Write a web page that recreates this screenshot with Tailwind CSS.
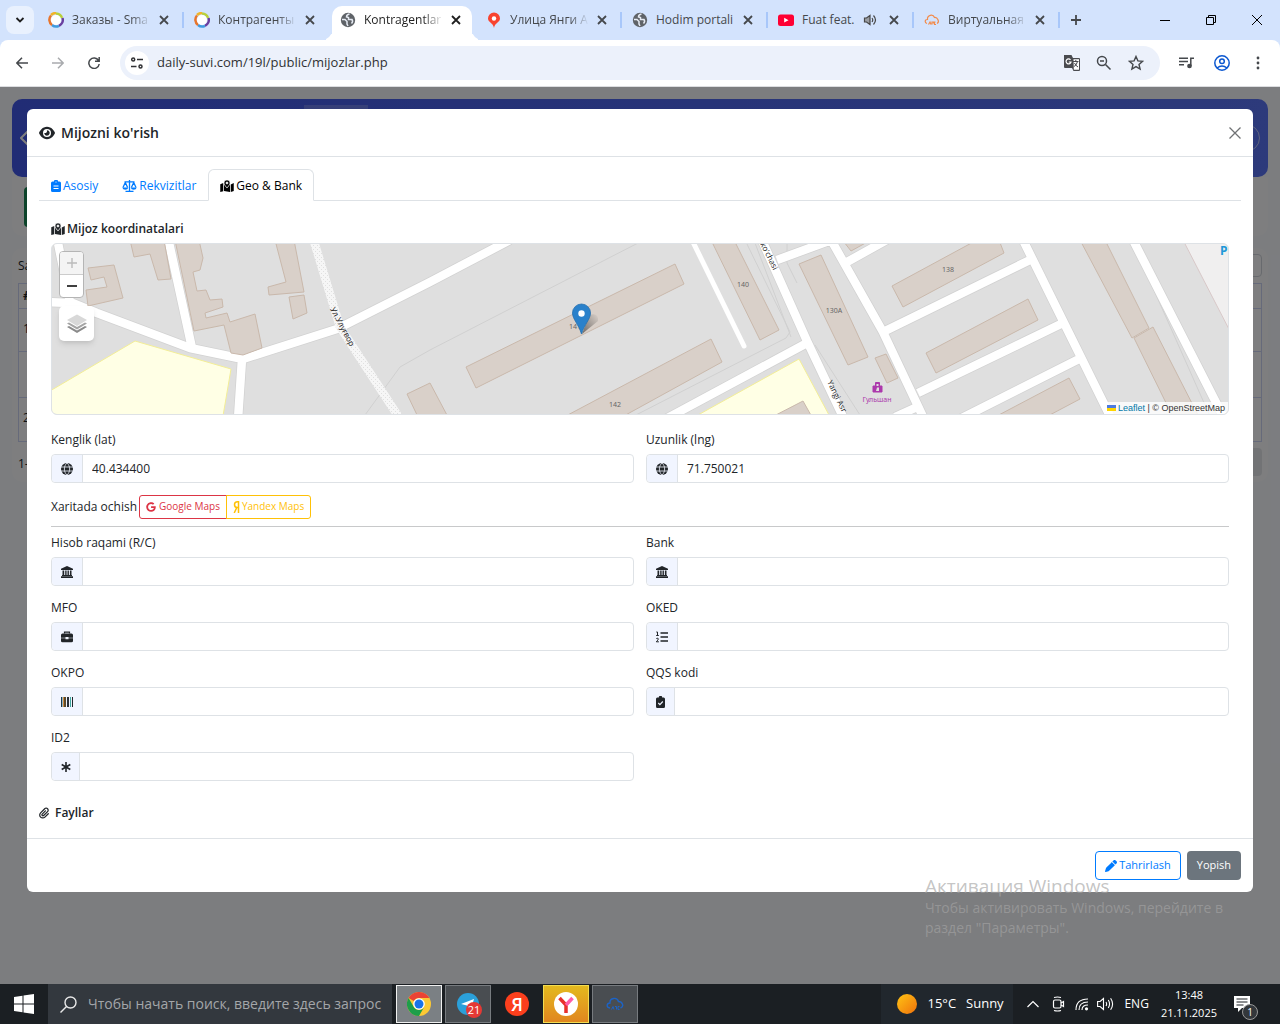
<!DOCTYPE html>
<html lang="uz">
<head>
  <meta charset="UTF-8" />
  <title>Kontragentlar</title>
  <script src="https://cdn.jsdelivr.net/npm/@tailwindcss/browser@4"></script>
</head>
<body class="min-h-screen flex flex-col bg-[#f8faff] font-['Open_Sans','Noto_Sans',sans-serif] text-xs text-[#212529] overflow-x-hidden">

  <!-- shared icons -->
  <svg class="hidden">
    <symbol id="i-x" viewBox="0 0 10 10"><path d="M1 1l8 8M9 1l-8 8" stroke="currentColor" stroke-width="1.8" fill="none" /></symbol>
    <symbol id="i-globe-tab" viewBox="0 0 16 16"><circle cx="8" cy="8" r="7.2" fill="#5f6368" /><path d="M2 7.500h3l2 2v2.500l1 2M9.500 2c-2.500.5-3 1.500-3 3l2 .5v2h3.500c1 1.500.5 3-.5 4" stroke="#e6ebf3" stroke-width="1.500" fill="none" /></symbol>
    <symbol id="i-ring" viewBox="0 0 16 16"><path d="M3 3A7 7 0 0 1 8 1" stroke="#f0b429" stroke-width="2.500" fill="none" /><path d="M8 1.500A6.500 6.500 0 0 1 14 6" stroke="#b9cf3c" stroke-width="2.500" fill="none" /><path d="M14.500 6A6.500 6.500 0 0 1 11 13.800" stroke="#6a3fa0" stroke-width="2.500" fill="none" /><path d="M11 13.800A6.500 6.500 0 0 1 4 13" stroke="#3f9be0" stroke-width="2.500" fill="none" /><path d="M4 13A6.500 6.500 0 0 1 3 3.500" stroke="#e8752c" stroke-width="2.500" fill="none" /><circle cx="8" cy="8" r="5" fill="#fff" /></symbol>
    <symbol id="i-map" viewBox="0 0 18 16"><path d="M0 5.500L4 4v11L0 16zM14 6l4-2v10.500L14 16zM5 4.500c.3 2 2 4 4 6.500 2-2.500 3.700-4.500 4-6V16L5 14.800z" /><path d="M9 0a4 4 0 0 0-4 4c0 2 2.500 4.500 4 6.500 1.500-2 4-4.500 4-6.500a4 4 0 0 0-4-4zm0 2.600a1.400 1.400 0 1 1 0 2.800 1.400 1.400 0 0 1 0-2.800z" stroke="#fff" stroke-width=".7" /></symbol>
    <symbol id="i-globe" viewBox="0 0 12 12"><circle cx="6" cy="6" r="6" /><path d="M0 4h12M0 8h12M6 0C2.500 3 2.500 9 6 12M6 0c3.500 3 3.500 9 0 12" stroke="#f1f5ff" stroke-width=".8" fill="none" /></symbol>
    <symbol id="i-bank" viewBox="0 0 12 12"><path d="M6 0l6 2.800V4H0V2.800zM1.500 4.500h1.700v4.700H1.500zM4.200 4.500h1.400v4.700H4.200zM6.500 4.500h1.400v4.700H6.500zM8.900 4.500h1.600v4.700H8.900zM1 9h10v1H1zM0 10.300h12V12H0z" /></symbol>
  </svg>

  <!-- browser tabs -->
  <header>
    <div class="h-10 bg-[#d3e3fd] flex items-center pl-1.5 text-[#45484c]">
      <button aria-label="Search tabs" class="w-7 h-7 mr-1 shrink-0 rounded-lg bg-[#e9f1fe] flex items-center justify-center">
        <svg class="w-2.5 h-2.5" viewBox="0 0 10 10"><path d="M1.500 3L5 6.500 8.500 3" stroke="#1f1f1f" stroke-width="1.800" fill="none" /></svg>
      </button>
      <div class="flex-1 max-w-[146px] min-w-0 flex items-center pl-2.5 pr-[11px] relative">
        <svg class="w-4 h-4 mr-2 shrink-0"><use href="#i-ring" /></svg>
        <span class="flex-1 whitespace-nowrap [mask-image:linear-gradient(to_right,black_75%,transparent)]">Заказы - Sma</span>
        <button aria-label="Close tab" class="ml-2 mr-1"><svg class="w-2.5 h-2.5"><use href="#i-x" /></svg></button>
        <span class="absolute right-0 w-0.5 h-4 bg-[#a8c7fa]"></span>
      </div>
      <div class="flex-1 max-w-[146px] min-w-0 flex items-center pl-2.5 pr-[11px]">
        <svg class="w-4 h-4 mr-2 shrink-0"><use href="#i-ring" /></svg>
        <span class="flex-1 whitespace-nowrap [mask-image:linear-gradient(to_right,black_75%,transparent)]">Контрагенты</span>
        <button aria-label="Close tab" class="ml-2 mr-1"><svg class="w-2.5 h-2.5"><use href="#i-x" /></svg></button>
      </div>
      <div class="flex-1 max-w-[146px] min-w-0 self-stretch flex items-center pl-0.5 pr-1">
        <div class="flex-1 min-w-0 h-[34px] self-end flex items-center rounded-t-[10px] bg-white text-[#1f1f1f] pl-2 pr-[7px] pb-1.5 relative before:absolute before:right-full before:bottom-0 before:w-2.5 before:h-2.5 before:rounded-br-[10px] before:shadow-[4px_4px_0_0_#fff] after:absolute after:left-full after:bottom-0 after:w-2.5 after:h-2.5 after:rounded-bl-[10px] after:shadow-[-4px_4px_0_0_#fff]">
          <svg class="w-4 h-4 mr-2 shrink-0"><use href="#i-globe-tab" /></svg>
          <span class="flex-1 whitespace-nowrap [mask-image:linear-gradient(to_right,black_75%,transparent)]">Kontragentlar</span>
          <button aria-label="Close tab" class="ml-2 mr-1"><svg class="w-2.5 h-2.5"><use href="#i-x" /></svg></button>
        </div>
      </div>
      <div class="flex-1 max-w-[146px] min-w-0 flex items-center pl-2.5 pr-[11px] relative">
        <svg class="w-4 h-4 mr-2 shrink-0" viewBox="0 0 16 16"><path d="M8 .5a6 6 0 0 0-6 6c0 4 5.200 4 6 9.500.8-5.500 6-5.500 6-9.500a6 6 0 0 0-6-6z" fill="#f8432f" /><circle cx="8" cy="6.500" r="2.200" fill="#fff" /></svg>
        <span class="flex-1 whitespace-nowrap [mask-image:linear-gradient(to_right,black_75%,transparent)]">Улица Янги А</span>
        <button aria-label="Close tab" class="ml-2 mr-1"><svg class="w-2.5 h-2.5"><use href="#i-x" /></svg></button>
        <span class="absolute right-0 w-0.5 h-4 bg-[#a8c7fa]"></span>
      </div>
      <div class="flex-1 max-w-[146px] min-w-0 flex items-center pl-2.5 pr-[11px] relative">
        <svg class="w-4 h-4 mr-2 shrink-0"><use href="#i-globe-tab" /></svg>
        <span class="flex-1 whitespace-nowrap">Hodim portali</span>
        <button aria-label="Close tab" class="ml-2 mr-1"><svg class="w-2.5 h-2.5"><use href="#i-x" /></svg></button>
        <span class="absolute right-0 w-0.5 h-4 bg-[#a8c7fa]"></span>
      </div>
      <div class="flex-1 max-w-[146px] min-w-0 flex items-center pl-2.5 pr-[11px] relative">
        <svg class="w-4 h-4 mr-2 shrink-0" viewBox="0 0 16 16"><rect y="2.500" width="16" height="11.500" rx="2.500" fill="#ff0033" /><path d="M6.200 5.800l4.300 2.400-4.300 2.400z" fill="#fff" /></svg>
        <span class="flex-1 whitespace-nowrap">Fuat feat.</span>
        <svg class="w-3.5 h-3.5 ml-1 shrink-0" viewBox="0 0 14 14" fill="none" stroke="#474747" stroke-width="1.200"><path d="M1.500 5h2L7 2.500v9L3.500 9h-2z" fill="#9a9da3" /><path d="M9 5q1.500 2 0 4M10.500 2.500q4 4.500 0 9" /></svg>
        <button aria-label="Close tab" class="ml-3 mr-1"><svg class="w-2.5 h-2.5"><use href="#i-x" /></svg></button>
        <span class="absolute right-0 w-0.5 h-4 bg-[#a8c7fa]"></span>
      </div>
      <div class="flex-1 max-w-[146px] min-w-0 flex items-center pl-2.5 pr-[11px] relative">
        <svg class="w-4 h-4 mr-2 shrink-0" viewBox="0 0 16 16" fill="none" stroke="#f28b4b" stroke-width="1.200"><path d="M3 11.500C.5 11 .5 7.500 3.500 7.500 3 3 9 1.500 10.500 5.500c3-.5 5.500 4.500 2.500 6" /><path d="M4.500 12.500l1.500-2.500 1 2.500M8 12.500V10h1.500v1.500M11.500 10H10.500v2.500h1.500" /></svg>
        <span class="flex-1 whitespace-nowrap [mask-image:linear-gradient(to_right,black_75%,transparent)]">Виртуальная</span>
        <button aria-label="Close tab" class="ml-2 mr-1"><svg class="w-2.5 h-2.5"><use href="#i-x" /></svg></button>
        <span class="absolute right-0 w-0.5 h-4 bg-[#a8c7fa]"></span>
      </div>
      <button aria-label="New tab" class="ml-2.5 shrink-0"><svg class="w-3 h-3" viewBox="0 0 12 12"><path d="M6 1v10M1 6h10" stroke="#45484c" stroke-width="1.800" /></svg></button>
      <div class="ml-auto flex items-center gap-9 pr-[18px] text-black">
        <button aria-label="Minimize"><svg class="w-2.5 h-2.5" viewBox="0 0 10 10"><path d="M0 5.500h10" stroke="currentColor" /></svg></button>
        <button aria-label="Restore"><svg class="w-2.5 h-2.5" viewBox="0 0 10 10" fill="none" stroke="currentColor"><path d="M.5 2.500h7v7h-7zM2.500 2.500v-2h7v7h-2" /></svg></button>
        <button aria-label="Close"><svg class="w-2.5 h-2.5" viewBox="0 0 10 10"><path d="M0 0l10 10M10 0L0 10" stroke="currentColor" /></svg></button>
      </div>
    </div>

    <!-- toolbar -->
    <div class="bg-[#d3e3fd]">
      <div class="h-[47px] bg-white rounded-t-lg border-b border-[#dcdde0] flex items-center pl-4 pr-4 text-[#45484c]">
        <button aria-label="Back" class="mr-6"><svg class="w-3 h-3" viewBox="0 0 12 12" fill="none" stroke="currentColor" stroke-width="1.500"><path d="M12 6H1M6 .8L.9 6 6 11.200" /></svg></button>
        <button aria-label="Forward" class="mr-6 text-[#a9abae]"><svg class="w-3 h-3" viewBox="0 0 12 12" fill="none" stroke="currentColor" stroke-width="1.500"><path d="M0 6h11M6 .8L11.100 6 6 11.200" /></svg></button>
        <button aria-label="Reload" class="mr-5"><svg class="w-3 h-3" viewBox="0 0 12 12" fill="none" stroke="currentColor" stroke-width="1.500"><path d="M10.500 3.500A5.200 5.200 0 1 0 11.200 7M11.200 0v4.200H7" /></svg></button>
        <div class="flex-1 h-[34px] rounded-full bg-[#ecf1fb] flex items-center pl-[5px] pr-4">
          <span class="w-6 h-6 rounded-full bg-white flex items-center justify-center mr-2">
            <svg class="w-3 h-3" viewBox="0 0 12 12" fill="none" stroke="#303134" stroke-width="1.500"><circle cx="2.200" cy="2.500" r="1.500" /><path d="M6 2.500h6M0 9.500h5.500" /><circle cx="9.500" cy="9.500" r="1.500" /></svg>
          </span>
          <input aria-label="Address" type="text" value="daily-suvi.com/19l/public/mijozlar.php" class="flex-1 min-w-0 bg-transparent outline-none text-[13px] text-[#303134]" />
          <svg class="w-4 h-4 mr-4" viewBox="0 0 16 16"><path d="M0 0h7.500l1.500 3H15q1 0 1 1v11q0 1-1 1H9.500L8 13H1q-1 0-1-1z" fill="#4a4b4f" /><path d="M9.500 4.200H15v10.500H9.800z" fill="#fff" /><path d="M9 6.500h5.500M11.800 5v1.500M13.500 6.500q-1 4-3.500 5M10.500 8q1 2.500 3.500 4" stroke="#4a4b4f" fill="none" /><path d="M6.500 4.800A2.500 2.500 0 1 0 7 7H4.800" stroke="#fff" stroke-width="1.200" fill="none" /></svg>
          <svg class="w-4 h-4 mr-4" viewBox="0 0 16 16" fill="none" stroke="currentColor" stroke-width="1.500"><circle cx="6" cy="6" r="4.500" /><path d="M9.500 9.500l5 5M4 6h4" /></svg>
          <svg class="w-4 h-4" viewBox="0 0 16 16" fill="none" stroke="currentColor" stroke-width="1.400"><path d="M8 1.500l1.900 4.400 4.700.4-3.600 3.100 1.100 4.700L8 11.600l-4.100 2.500L5 9.400 1.400 6.300l4.700-.4z" /></svg>
        </div>
        <svg class="w-4 h-4 ml-[18px]" viewBox="0 0 16 16" fill="none" stroke="currentColor" stroke-width="1.500"><path d="M1 3.200h9M1 6.500h9M1 9.800h5M12.800 11V3.200H16" /><circle cx="11.500" cy="11" r="1.600" fill="currentColor" /></svg>
        <button aria-label="Profile" class="ml-5"><svg class="w-4 h-4" viewBox="0 0 16 16" fill="none" stroke="#0b57d0" stroke-width="1.500"><circle cx="8" cy="8" r="7.200" /><circle cx="8" cy="6.300" r="2.300" /><path d="M3 13q5-4 10 0" /></svg></button>
        <button aria-label="Menu" class="ml-[22px]"><svg class="w-3 h-4" viewBox="0 0 12 16" fill="currentColor"><circle cx="6" cy="3" r="1.400" /><circle cx="6" cy="8" r="1.400" /><circle cx="6" cy="13" r="1.400" /></svg></button>
      </div>
    </div>
  </header>

  <!-- page with open dialog -->
  <main class="flex-1 relative pb-[92px]">

    <div class="absolute inset-0 px-3 pt-3 overflow-hidden" aria-hidden="true">
      <div class="h-[78px] rounded-[10px] bg-linear-to-r from-[#4259ea] to-[#5a74f6] flex items-center justify-between px-2 text-white relative">
        <svg class="w-4 h-4" viewBox="0 0 16 16" fill="none" stroke="currentColor" stroke-width="2"><path d="M1 8l7-7 7 7-7 7z" /></svg>
        <div class="w-7 h-7 rounded-full border border-white/60"></div>
        <div class="absolute top-1.5 left-[292px] w-16 h-8 bg-white/20"></div>
      </div>
      <div class="h-[59px] bg-white/60 rounded-b-[10px] px-3 py-2.5"><div class="w-24 h-10 bg-[#198754] rounded"></div></div>
      <div class="mt-3 h-[234px] bg-white/60 rounded-[10px] px-1.5 pt-1.5">
        <div class="flex justify-between h-[23px] leading-6">Sahifada<span class="w-20 border border-gray-300 rounded"></span></div>
        <div class="mt-1.5 border border-[#cdd5f5] divide-y divide-[#cdd5f5]">
          <div class="h-[25px] px-1 leading-6 font-bold">#</div>
          <div class="h-[43px] px-1 leading-10">1</div>
          <div class="h-[46px]"></div>
          <div class="h-[43px] px-1 leading-10">2</div>
        </div>
        <div class="flex justify-between pt-1.5 leading-8">1-2<span class="w-20 h-7 bg-gray-200 rounded"></span></div>
      </div>
    </div>
    <div class="absolute inset-0 bg-black/50"></div>

    <div role="dialog" aria-labelledby="dlg-title" class="relative mt-[22px] mx-[27px] bg-white rounded-md">
      <div class="h-12 border-b border-[#dee2e6] flex items-center px-3">
        <svg class="w-4 h-4 mr-1.5" viewBox="0 0 576 512" fill="currentColor"><path d="M288 32c-80.800 0-145.500 36.800-192.600 80.600C48.600 156 17.300 208 2.500 243.700c-3.300 7.900-3.300 16.700 0 24.600C17.300 304 48.600 356 95.400 399.400C142.500 443.200 207.200 480 288 480s145.500-36.800 192.600-80.600c46.800-43.500 78.100-95.400 93-131.100c3.300-7.900 3.300-16.700 0-24.600c-14.900-35.700-46.200-87.700-93-131.100C433.500 68.800 368.800 32 288 32zM144 256a144 144 0 1 1 288 0 144 144 0 1 1 -288 0zm144-64c0 35.300-28.700 64-64 64c-7.100 0-13.900-1.200-20.300-3.300c-5.500-1.800-11.900 1.600-11.700 7.400c.3 6.900 1.300 13.800 3.200 20.700c13.700 51.200 66.400 81.600 117.600 67.900s81.600-66.400 67.900-117.600c-11.100-41.500-47.800-69.400-88.600-71.100c-5.800-.2-9.200 6.100-7.400 11.700c2.100 6.400 3.300 13.200 3.300 20.300z" /></svg>
        <h1 id="dlg-title" class="text-sm font-semibold">Mijozni ko'rish</h1>
        <button aria-label="Close" class="ml-auto"><svg class="w-3 h-3" viewBox="0 0 12 12"><path d="M.5 .5l11 11M11.500 .5l-11 11" stroke="#707274" stroke-width="1.300" /></svg></button>
      </div>

      <div class="p-3 pb-4">
        <nav class="h-8 flex border-b border-[#dee2e6] text-[#007bff]">
          <a href="#" class="flex items-center px-3 pt-0.5">
            <svg class="w-2.5 h-3 mr-0.5" viewBox="0 0 10 12" fill="currentColor"><path d="M1.500 1.500H3a2 2 0 0 1 4 0h1.500Q10 1.500 10 3v7.500Q10 12 8.500 12h-7Q0 12 0 10.500V3q0-1.500 1.500-1.500z" /><path d="M2.500 6h5M2.500 8.500h5" stroke="#fff" /><circle cx="5" cy="2" r=".6" fill="#fff" /></svg>Asosiy</a>
          <a href="#" class="flex items-center px-3 pt-0.5">
            <svg class="w-[15px] h-3 mr-0.5" viewBox="0 0 15 12" fill="none" stroke="currentColor" stroke-width="1.300"><path d="M2.500 1.800h10M7.500 0v11.200M3.500 11.300h8M3.300 2.500L1 7.500M3.300 2.500l2.300 5M11.700 2.500l-2.300 5M11.700 2.500l2.300 5" /><path d="M.3 7.500h6q-.5 2.200-3 2.200T.3 7.500zM8.700 7.500h6q-.5 2.200-3 2.200t-3-2.200z" fill="currentColor" stroke="none" /></svg>Rekvizitlar</a>
          <a href="#" aria-current="page" class="flex items-center h-8 px-[11px] pt-0.5 border border-b-white border-[#dee2e6] rounded-t-md text-black">
            <svg class="w-3.5 h-3 mr-0.5" fill="currentColor"><use href="#i-map" /></svg>Geo &amp; Bank</a>
        </nav>

        <section class="px-3 pt-5">
          <h2 class="flex items-center leading-4 font-semibold mb-1.5"><svg class="w-3.5 h-3 mr-0.5" fill="currentColor"><use href="#i-map" /></svg>Mijoz koordinatalari</h2>

          <div class="relative h-[172px] rounded-md border border-[#dee2e6] overflow-hidden bg-[#dfdfdf]">
            <svg class="w-full h-full" viewBox="52 244 1176 170" preserveAspectRatio="xMidYMid slice">
              <defs>
                <pattern id="dots" width="4" height="4" patternUnits="userSpaceOnUse"><rect width="4" height="4" fill="#f6f6f6" /><path d="M1 1h1v1H1zM3 3h1v1H3z" fill="#e0e0e0" /></pattern>
                <linearGradient id="shade" x1="0" y1="1" x2="1" y2="0"><stop stop-color="#000" stop-opacity=".5" /><stop offset="1" stop-color="#000" stop-opacity="0" /></linearGradient>
              </defs>
              <rect x="50" y="240" width="1180" height="180" fill="#dfdfdf" />
              <path d="M1183 240h50v97z" fill="#f0efef" stroke="#d8c8c8" />
              <path d="M50 391l85-50 96 28-8 47H50zM698 415l101-56 30 56z" fill="#ffffe5" stroke="#f3ee96" />
              <path d="M365 415l35-48 30-17 208-107M636 415l150-77 4-6-45-92M755 243l36 94M787 243v20l10 20M815 345l45 70M1133 243l76 171" fill="none" stroke="#d0d0d0" />
              <!-- road casing, then fill -->
              <g fill="none" stroke-linejoin="round">
                <path d="M57 238l13 64 27 11 93 35 53 11 94-30 93-47 80-42M45 302l25 1M168 238l24 110M242 359l-4 60M761 238l46 103 38 80M777 260l60-22M807 343l-145 78M830 238l53 94 42 89M847 262l45-25M883 332l147-72M1022 238l89 180M918 393l147-71M958 420l125-63M895 417l22-10M1132 238l93 182" stroke="#d2d2d2" stroke-width="10" />
                <path d="M57 238l13 64 27 11 93 35 53 11 94-30 93-47 80-42M45 302l25 1M168 238l24 110M242 359l-4 60M761 238l46 103 38 80M777 260l60-22M807 343l-145 78M830 238l53 94 42 89M847 262l45-25M883 332l147-72M1022 238l89 180M918 393l147-71M958 420l125-63M895 417l22-10M1132 238l93 182" stroke="#fff" stroke-width="8.500" />
                <path d="M691 238l53 108" stroke="#fff" stroke-width="5" stroke-linecap="round" />
                <path d="M313 238l27 89 60 92" stroke="url(#dots)" stroke-width="8.500" />
              </g>
              <g fill="#d9d0c9" stroke="#c9b8ab">
                <path d="M88 268l26-3 9 33-35 8-2-16 21-3-3-10-13 3zM130 240h34l7 39-13 1-8-26-16 3zM175 240h24l4 18-3 12-7 2 4 19 9-1 4 10 12-1 1 8-18 6 1 5 21-5 3 9 25-8 7 34-19 7-12-2-7-28-30 6zM275 240h19l10 52-35 3-1-8 18-5zM289 297l15-2 3 18-14 6z" />
                <path d="M407 394l23-11 18 34h-30zM466 367l209-103 9 20-208 104zM564 417l147-78 11 23-100 55zM711 240h23l45 90-19 10zM799 264l22-9 47 102-20 8zM772 417l31-16 9 16zM875 358l11-4 12 24-11 5z" />
                <path d="M892 286l85-46h22l5 13-101 54zM844 242l7 9 20-11zM926 353l102-54 10 21-102 53zM995 417l74-39 11 21-34 18zM1080 240h25l44 88-17 10zM1134 338l19-11 46 90h-26z" />
              </g>
              <g font-family="Noto Sans" font-size="7" fill="#666" text-anchor="middle">
                <text x="575" y="329">141</text><text x="615" y="407">142</text><text x="743" y="287">140</text><text x="834" y="313">130A</text><text x="948" y="272">138</text>
              </g>
              <g font-family="Open Sans" font-size="8" fill="#222">
                <text transform="translate(330 309) rotate(62)">Ул.Улуғвор</text>
                <text transform="translate(760 244) rotate(63)">ko'chasi</text>
                <text transform="translate(827 382) rotate(64)">Yangi Asr</text>
              </g>
              <path d="M873 386h9v6h-9zM875.500 386v-3.500h4v3.500" fill="#ac39ac" stroke="#ac39ac" /><path d="M876.500 384h2v2h-2zM877 387.500h2v3.500h-3z" fill="#dfdfdf" />
              <text x="877" y="402" font-family="Noto Sans" font-size="7" fill="#ac39ac" text-anchor="middle">Гульшан</text>
              <text x="1220" y="255" font-family="Open Sans" font-size="12" font-weight="700" fill="#2098d8">P</text>
              <!-- marker -->
              <path d="M582 334l16-13q1-9-9-6z" fill="url(#shade)" />
              <path d="M581.500 304a9 9 0 0 0-9 9c0 6 6 11 9 21 3-10 9-15 9-21a9 9 0 0 0-9-9z" fill="#2a81cb" stroke="#2670ae" stroke-width=".8" /><circle cx="581.500" cy="313.500" r="3.200" fill="#fff" />
            </svg>
            <div class="absolute top-[7px] left-[7px] w-[25px] rounded-sm border border-[#b5b5b5] bg-white overflow-hidden">
              <button aria-label="Zoom in" class="w-full h-[23px] bg-[#f4f4f4] text-[#bbb] flex items-center justify-center border-b border-[#ccc]"><svg class="w-2.5 h-2.5" viewBox="0 0 10 10"><path d="M5 0v10M0 5h10" stroke="currentColor" stroke-width="1.400" /></svg></button>
              <button aria-label="Zoom out" class="w-full h-[22px] text-black flex items-center justify-center"><svg class="w-2.5 h-2.5" viewBox="0 0 10 10"><path d="M0 5h10" stroke="currentColor" stroke-width="1.400" /></svg></button>
            </div>
            <button aria-label="Layers" class="absolute top-[62px] left-[7px] w-[35px] h-[35px] rounded-[5px] bg-white shadow-md flex items-center justify-center">
              <svg class="w-[22px] h-[22px]" viewBox="0 0 22 22"><path d="M1 14l10 6 10-6-2-1-8 4.500L3 13z" fill="#8b8b8b" /><path d="M1 10.500l10 6 10-6-2-1-8 4.500L3 9.500z" fill="#a5a5a5" /><path d="M11 1.500l10 5.500-10 6L1 7z" fill="#d8d8d8" /></svg>
            </button>
            <div class="absolute right-0 bottom-0 h-3 px-[3px] bg-white/80 flex items-center text-[9px] leading-3 text-[#333] font-['Liberation_Sans',sans-serif]">
              <svg class="w-[9px] h-1.5 mr-0.5" viewBox="0 0 9 6"><path d="M0 0h9v3H0z" fill="#4c7be1" /><path d="M0 3h9v3H0z" fill="#ffd500" /></svg>
              <a href="#" class="text-[#0078a8]">Leaflet</a>&nbsp;| © OpenStreetMap
            </div>
          </div>

          <div class="mt-4 grid grid-cols-2 gap-x-3">
            <div>
              <label for="lat" class="block leading-[18px] mb-[5px]">Kenglik (lat)</label>
              <div class="flex h-[29px] border border-[#dee2e6] rounded">
                <span class="w-[31px] bg-[#f1f5ff] border-r border-[#dee2e6] rounded-l flex items-center justify-center"><svg class="w-3 h-3" fill="currentColor"><use href="#i-globe" /></svg></span>
                <input id="lat" type="text" value="40.434400" class="flex-1 min-w-0 px-[9px] outline-none" />
              </div>
            </div>
            <div>
              <label for="lng" class="block leading-[18px] mb-[5px]">Uzunlik (lng)</label>
              <div class="flex h-[29px] border border-[#dee2e6] rounded">
                <span class="w-[31px] bg-[#f1f5ff] border-r border-[#dee2e6] rounded-l flex items-center justify-center"><svg class="w-3 h-3" fill="currentColor"><use href="#i-globe" /></svg></span>
                <input id="lng" type="text" value="71.750021" class="flex-1 min-w-0 px-[9px] outline-none" />
              </div>
            </div>
          </div>

          <div class="mt-3 flex items-center h-6">
            <span class="mr-0.5">Xaritada ochish</span>
            <a href="#" class="h-6 px-1.5 flex items-center border border-[#dc3545] rounded-l-[3px] text-[#dc3545] text-[10px]"><svg class="w-2.5 h-2.5 mr-[3px]" viewBox="0 0 488 512" fill="currentColor"><path d="M488 261.800C488 403.300 391.100 504 248 504 110.800 504 0 393.200 0 256S110.800 8 248 8c66.800 0 123 24.500 166.300 64.900l-67.500 64.900C258.500 52.600 94.300 116.600 94.300 256c0 86.500 69.100 156.600 153.700 156.600 98.200 0 135-70.400 140.800-106.900H248v-85.300h236.100c2.300 12.700 3.900 24.900 3.900 41.400z" /></svg>Google Maps</a>
            <a href="#" class="h-6 px-1.5 -ml-px flex items-center border border-[#ffc107] rounded-r-[3px] text-[#ffc107] text-[10px]"><svg class="w-2 h-3 mr-px" viewBox="0 0 8 12" fill="none" stroke="currentColor" stroke-width="1.500"><path d="M5.500 12V.8H4.500C.5 .8.500 6.500 4.500 6.500h1M3.800 6.500L1.200 12" /></svg>Yandex Maps</a>
          </div>
          <hr class="mt-[7px] mb-[7px] border-[#c8c9ca]" />

          <div class="grid grid-cols-2 gap-x-3 gap-y-[13px]">
            <div>
              <label for="account" class="block leading-[18px] mb-[5px]">Hisob raqami (R/C)</label>
              <div class="flex h-[29px] border border-[#dee2e6] rounded">
                <span class="w-[31px] bg-[#f1f5ff] border-r border-[#dee2e6] rounded-l flex items-center justify-center"><svg class="w-3 h-3" fill="currentColor"><use href="#i-bank" /></svg></span>
                <input id="account" type="text" class="flex-1 min-w-0 px-[9px] outline-none" />
              </div>
            </div>
            <div>
              <label for="bank" class="block leading-[18px] mb-[5px]">Bank</label>
              <div class="flex h-[29px] border border-[#dee2e6] rounded">
                <span class="w-[31px] bg-[#f1f5ff] border-r border-[#dee2e6] rounded-l flex items-center justify-center"><svg class="w-3 h-3" fill="currentColor"><use href="#i-bank" /></svg></span>
                <input id="bank" type="text" class="flex-1 min-w-0 px-[9px] outline-none" />
              </div>
            </div>
            <div>
              <label for="mfo" class="block leading-[18px] mb-[5px]">MFO</label>
              <div class="flex h-[29px] border border-[#dee2e6] rounded">
                <span class="w-[31px] bg-[#f1f5ff] border-r border-[#dee2e6] rounded-l flex items-center justify-center">
                  <svg class="w-3 h-3" viewBox="0 0 12 12" fill="currentColor"><path d="M3.500 2.500V1.200h5v1.300" fill="none" stroke="currentColor" stroke-width="1.200" /><path d="M1.500 2.500h9q1.500 0 1.500 1.500v2.700H7.500v-.7h-3v.7H0V4q0-1.500 1.500-1.500zM0 7.300h4.500v1h3v-1H12V10q0 1.200-1.500 1.200h-9Q0 11.200 0 10z" /></svg>
                </span>
                <input id="mfo" type="text" class="flex-1 min-w-0 px-[9px] outline-none" />
              </div>
            </div>
            <div>
              <label for="oked" class="block leading-[18px] mb-[5px]">OKED</label>
              <div class="flex h-[29px] border border-[#dee2e6] rounded">
                <span class="w-[31px] bg-[#f1f5ff] border-r border-[#dee2e6] rounded-l flex items-center justify-center">
                  <svg class="w-3 h-3" viewBox="0 0 12 12" fill="none" stroke="currentColor"><path d="M4.500 2h7.500M4.500 6h7.500M4.500 10h7.500" stroke-width="1.300" /><path d="M.3 1h1.200v3.500M.2 4.500h2.600M.3 7.500q2-1 2 .5 0 .8-2 2.800h2.600" /></svg>
                </span>
                <input id="oked" type="text" class="flex-1 min-w-0 px-[9px] outline-none" />
              </div>
            </div>
            <div>
              <label for="okpo" class="block leading-[18px] mb-[5px]">OKPO</label>
              <div class="flex h-[29px] border border-[#dee2e6] rounded">
                <span class="w-[31px] bg-[#f1f5ff] border-r border-[#dee2e6] rounded-l flex items-center justify-center">
                  <svg class="w-3 h-3" viewBox="0 0 12 12"><path d="M0 1h1v10H0z" fill="#1f3b4d" /><path d="M1 1h1v10H1z" fill="#8fb5c9" /><path d="M2 1h1v10H2z" fill="#d08a3c" /><path d="M3 1h2v10H3z" fill="#5b4a2c" /><path d="M6 1h2v10H6z" fill="#2b3037" /><path d="M9 1h1v10H9z" fill="#3fa9a0" /><path d="M11 1h1v10h-1z" fill="#212529" /></svg>
                </span>
                <input id="okpo" type="text" class="flex-1 min-w-0 px-[9px] outline-none" />
              </div>
            </div>
            <div>
              <label for="qqs" class="block leading-[18px] mb-[5px]">QQS kodi</label>
              <div class="flex h-[29px] border border-[#dee2e6] rounded">
                <span class="w-7 bg-[#f1f5ff] border-r border-[#dee2e6] rounded-l flex items-center justify-center">
                  <svg class="w-[9px] h-3" viewBox="0 0 9 12" fill="currentColor"><path d="M1.300 1.500h1.500a1.700 1.700 0 0 1 3.400 0h1.500Q9 1.500 9 3v7.500Q9 12 7.700 12H1.300Q0 12 0 10.500V3q0-1.500 1.300-1.500z" /><path d="M2.300 7l1.600 1.600L6.800 5.500" stroke="#f1f5ff" stroke-width="1.200" fill="none" /></svg>
                </span>
                <input id="qqs" type="text" class="flex-1 min-w-0 px-[9px] outline-none" />
              </div>
            </div>
            <div>
              <label for="id2" class="block leading-[18px] mb-[5px]">ID2</label>
              <div class="flex h-[29px] border border-[#dee2e6] rounded">
                <span class="w-7 bg-[#f1f5ff] border-r border-[#dee2e6] rounded-l flex items-center justify-center">
                  <svg class="w-2.5 h-2.5" viewBox="0 0 10 10"><path d="M5 0v10M.7 2.500l8.600 5M9.300 2.500l-8.600 5" stroke="currentColor" stroke-width="1.600" /></svg>
                </span>
                <input id="id2" type="text" class="flex-1 min-w-0 px-[9px] outline-none" />
              </div>
            </div>
          </div>
        </section>

        <h2 class="mt-[23px] flex items-center leading-[18px] font-semibold"><svg class="w-2.5 h-3 mr-1.5" viewBox="0 0 448 512" fill="currentColor"><path d="M364.200 83.800c-24.400-24.400-64-24.400-88.400 0l-184 184c-42.100 42.100-42.100 110.300 0 152.400s110.300 42.100 152.400 0l152-152c10.900-10.900 28.700-10.900 39.600 0s10.900 28.700 0 39.600l-152 152c-64 64-167.600 64-231.600 0s-64-167.600 0-231.600l184-184c46.300-46.300 121.300-46.300 167.600 0s46.300 121.300 0 167.600l-176 176c-28.600 28.600-75 28.600-103.600 0s-28.600-75 0-103.600l144-144c10.900-10.900 28.700-10.900 39.600 0s10.900 28.700 0 39.600l-144 144c-6.700 6.700-6.700 17.700 0 24.400s17.700 6.700 24.400 0l176-176c24.400-24.400 24.400-64 0-88.400z" /></svg>Fayllar</h2>
      </div>

      <div class="border-t border-[#dee2e6] p-3 flex justify-end gap-1.5 text-[11px]">
        <button class="h-[29px] px-[9px] flex items-center border border-[#007bff] rounded text-[#007bff]"><svg class="w-3 h-3 mr-0.5" viewBox="0 0 512 512" fill="currentColor"><path d="M410.300 231l11.300-11.300-33.900-33.900-62.100-62.100L291.700 89.800l-11.300 11.300-22.600 22.600L58.600 322.900c-10.400 10.400-18 23.300-22.200 37.400L1 480.700c-2.500 8.400-.2 17.500 6.100 23.700s15.300 8.500 23.700 6.100l120.300-35.400c14.100-4.200 27-11.800 37.400-22.200L387.700 253.700 410.300 231zM362.700 18.700L348.300 33.200 325.700 55.800 314.300 67.100l33.900 33.900 62.100 62.100 33.900 33.900 11.300-11.300 22.600-22.600 14.500-14.500c25-25 25-65.500 0-90.500L453.300 18.700c-25-25-65.500-25-90.500 0z" /></svg>Tahrirlash</button>
        <button class="h-[29px] px-2.5 rounded bg-[#6c757d] text-white font-medium">Yopish</button>
      </div>
    </div>

    <!-- activation notice over the desktop -->
    <div class="absolute right-[46px] bottom-[46px] w-[309px] text-[#a4a4a4]/65 pointer-events-none">
      <p class="text-[19px] leading-6">Активация Windows</p>
      <p class="text-sm leading-5 whitespace-nowrap">Чтобы активировать Windows, перейдите в<br />раздел "Параметры".</p>
    </div>
  </main>

  <!-- taskbar -->
  <footer class="h-10 bg-[#1b1f23] flex items-stretch text-white">
    <button aria-label="Start" class="w-12 flex items-center justify-center"><svg class="w-5 h-5" viewBox="0 0 20 20" fill="#fff"><path d="M0 3l8.500-1.200v7.700H0zM9.500 1.600L20 0v9.500H9.500zM0 10.500h8.500v7.700L0 17zM9.500 10.500H20V20L9.500 18.400z" /></svg></button>
    <div class="w-[344px] bg-[#33383e] flex items-center pl-3">
      <svg class="w-[17px] h-[17px] mr-[11px]" viewBox="0 0 17 17" fill="none" stroke="#e8e8e8" stroke-width="1.400"><circle cx="10.500" cy="6.500" r="5.500" /><path d="M6.500 10.500L.5 16.500" /></svg>
      <input aria-label="Поиск" type="text" placeholder="Чтобы начать поиск, введите здесь запрос" class="flex-1 min-w-0 bg-transparent outline-none text-sm placeholder:text-[#a3a6a9]" />
    </div>
    <div class="flex gap-[3px] pl-1 pt-px pb-px">
      <button aria-label="Chrome" class="w-[46px] border border-[#f0f0f0] bg-[#7b8084] flex items-center justify-center"><svg class="w-6 h-6" viewBox="0 0 24 24"><circle cx="12" cy="12" r="12" fill="#fcc934" /><path d="M1.600 6A12 12 0 0 1 22.400 6H12a6 6 0 0 0-5.200 3z" fill="#ea4335" /><path d="M1.600 6A12 12 0 0 0 12 24l5.200-9a6 6 0 0 1-10.400 0z" fill="#1e9e4a" /><circle cx="12" cy="12" r="5.800" fill="#fff" /><circle cx="12" cy="12" r="4.500" fill="#1a73e8" /></svg></button>
      <button aria-label="Telegram" class="w-[46px] border border-[#777b7f] bg-[#494d51] flex items-center justify-center relative"><svg class="w-[22px] h-[22px]" viewBox="0 0 22 22"><circle cx="11" cy="11" r="11" fill="#2ba0da" /><path d="M4 11l13-5-3 10-4-3.500z" fill="#fff" /></svg><span class="absolute right-2 bottom-1 w-4 h-4 rounded-full bg-[#e53935] text-[11px] leading-4 text-center">21</span></button>
      <button aria-label="Yandex" class="w-[46px] flex items-center justify-center"><span class="w-6 h-6 rounded-full bg-[#fc3f1d] text-lg leading-6 font-semibold text-center">Я</span></button>
      <button aria-label="Yandex Browser" class="w-[46px] border border-[#f3dc50] bg-linear-to-b from-[#e3b91e] to-[#e0861f] flex items-center justify-center"><svg class="w-6 h-6" viewBox="0 0 24 24" fill="none" stroke-width="3.500"><circle cx="12" cy="12" r="12" fill="#fff" /><path d="M5.500 6l6.500 7v8" stroke="#e8302b" /><path d="M18.500 6L12 13" stroke="#ff5ca8" /></svg></button>
      <button aria-label="ATC" class="w-[46px] border border-[#777b7f] bg-[#494d51] flex items-center justify-center"><svg class="w-[18px] h-[18px]" viewBox="0 0 18 18" fill="none" stroke="#1d63c4" stroke-width="1.400"><path d="M4 13C0 12.500.5 8 4 8 3.500 3 11 1.500 12.500 6.500c4 0 6 5 2 6.500" /><path d="M5.500 14.500l1.500-3 1 3M9 11.500h1.500v3M13.500 11.500H12v3h1.500" stroke-width="1" /></svg></button>
    </div>
    <div class="ml-auto w-[132px] bg-[#21272d] flex items-center pl-4 text-[13px]">
      <svg class="w-5 h-5 mr-2.5" viewBox="0 0 20 20"><defs><linearGradient id="sun" x1="0" y1="0" x2="1" y2="1"><stop stop-color="#ffc414" /><stop offset="1" stop-color="#f0720c" /></linearGradient></defs><circle cx="10" cy="10" r="10" fill="url(#sun)" /></svg>
      <span>15°C</span><span class="ml-2.5">Sunny</span>
    </div>
    <div class="flex items-center pl-3.5">
      <svg class="w-3 h-2 mr-3" viewBox="0 0 12 8" fill="none" stroke="#fff" stroke-width="1.200"><path d="M.5 7L6 1.500 11.500 7" /></svg>
      <svg class="w-3.5 h-4 mr-2.5" viewBox="0 0 14 16" fill="none" stroke="#fff" stroke-width="1.200"><rect x="2.500" y="4" width="7.500" height="8" rx="1.500" /><path d="M10 7l2.500-1.500v5L10 9M3 1.500q3.500-1 7 0M3 14.500q3.500 1 7 0" /></svg>
      <svg class="w-3.5 h-3.5 mr-2" viewBox="0 0 14 14" fill="none" stroke="#fff" stroke-width="1.100"><path d="M1 13Q1 2 13 2M4 13Q4 5 13 5M7 13q0-5 6-5" /><circle cx="11.500" cy="11.800" r="1.600" fill="#fff" stroke="none" /></svg>
      <svg class="w-[17px] h-4 mr-2.5" viewBox="0 0 17 16" fill="none" stroke="#fff" stroke-width="1.100"><path d="M.6 5.500h2.500L6.500 2.500v11L3.100 10.500H.6zM9 6q1.300 2 0 4M11.300 4q2.500 4 0 8M13.600 2.200q4 5.800 0 11.600" /></svg>
      <span class="mr-3">ENG</span>
      <div class="text-center text-[11px] leading-[18px] mr-[17px]">13:48<br />21.11.2025</div>
      <div class="relative mr-[30px]">
        <svg class="w-4 h-4" viewBox="0 0 16 16"><path d="M0 0h16v12H8l-4 4v-4H0z" fill="#fff" /><path d="M2.500 3h11M2.500 6h11M2.500 9h7" stroke="#1b1f23" /></svg>
        <span class="absolute -right-2 -bottom-2 w-4 h-4 rounded-full border border-[#9a9a9a] bg-[#33373b] text-[10px] leading-[14px] text-center">1</span>
      </div>
    </div>
  </footer>

</body>
</html>
